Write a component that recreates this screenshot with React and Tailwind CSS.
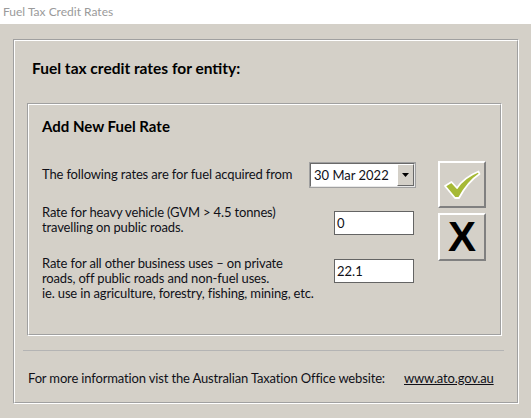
export default function App() {
  const etchedOuter = "border border-t-[#a0a0a0] border-l-[#a0a0a0] border-b-white border-r-white";
  const etchedInner = "border border-t-white border-l-white border-b-[#a0a0a0] border-r-[#a0a0a0]";
  const raised = "border-2 border-t-white border-l-white border-b-[#808080] border-r-[#808080]";
  return (
    <div className="w-[532px] h-[420px] bg-white overflow-hidden font-['Lato',sans-serif] text-[#101018]">
      <div className="h-6 pl-[3px] pt-[4px] text-[12px] leading-[16px] text-[#9a9a9a] whitespace-nowrap">Fuel Tax Credit Rates</div>
      <div className="w-[531px] h-[394px] bg-[#d4d0c8] pt-[15px] pl-[13px]">
        <div className={`w-[506px] h-[365px] ${etchedOuter}`}>
          <div className={`w-full h-full ${etchedInner}`}>
            <div className="pl-[17px] pt-[18px] text-[15.5px] leading-[18px] font-bold text-black whitespace-nowrap">
              Fuel tax credit rates for entity:
            </div>
            <div className={`ml-[12px] mt-[26px] w-[475px] h-[233px] ${etchedOuter}`}>
              <div className={`w-full h-full ${etchedInner} flex`}>
                <div className="pl-[13px] flex flex-col text-[13px] leading-[15px] tracking-[-0.15px] whitespace-nowrap">
                  <div className="mt-[12px] h-[18px] text-[15px] leading-[18px] tracking-normal font-bold text-black">
                    Add New Fuel Rate
                  </div>
                  <div className="mt-[27px] flex h-[26px]">
                    <div className="w-[267px] mt-[5px]">The following rates are for fuel acquired from</div>
                    <div className="w-[107px] h-[26px] border border-[#a0a0a0] flex">
                      <div className="flex-1 flex border border-t-[#696969] border-l-[#696969] border-b-[#e8e8e8] border-r-[#e8e8e8] bg-white">
                        <div className="flex-1 pl-[3px] pt-[4px] text-[13px] leading-[15px] tracking-normal">30 Mar 2022</div>
                        <div className="w-[17px] h-[22px] bg-[#d4d0c8] border border-t-white border-l-white border-b-[#696969] border-r-[#696969] flex items-center justify-center">
                          <svg width="8" height="5" viewBox="0 0 8 5"><path d="M0 0H7L3.5 4Z" fill="#000" /></svg>
                        </div>
                      </div>
                    </div>
                  </div>
                  <div className="mt-[16px] flex h-[32px]">
                    <div className="w-[292px] pt-[1px]">Rate for heavy vehicle (GVM &gt; 4.5 tonnes)<br />travelling on public roads.</div>
                    <div className="mt-[7px] w-[80px] h-[24px] border border-[#646464] bg-white pl-[2px] pt-[4px] tracking-normal">0</div>
                  </div>
                  <div className="mt-[18px] flex">
                    <div className="w-[292px] pt-[2px]">
                      Rate for all other business uses – on private<br />roads, off public roads and non-fuel uses.<br />ie. use in agriculture, forestry, fishing, mining, etc.
                    </div>
                    <div className="mt-[5px] w-[80px] h-[24px] border border-[#646464] bg-white pl-[2px] pt-[4px] tracking-normal">22.1</div>
                  </div>
                </div>
                <div className="ml-[22px] mt-[56px] flex flex-col gap-[5px]">
                  <div className={`w-[48px] h-[47px] ${raised} flex items-center justify-center`}>
                    <svg width="38" height="30" viewBox="0 0 38 30">
                      <path d="M2 16 L8.5 12 L14 18 Q21 7.5 35.5 1.5 L36.5 4 Q24.5 12 16 28 L12 28 Z" fill="#a6b936" stroke="#fff" strokeWidth="1.8" strokeLinejoin="round" />
                    </svg>
                  </div>
                  <div className={`w-[48px] h-[48px] ${raised} flex items-center justify-center font-['Liberation_Sans',sans-serif] font-bold text-[42px] leading-none text-black`}>
                    X
                  </div>
                </div>
              </div>
            </div>
            <div className="ml-[8px] mt-[14px] w-[481px] h-px bg-[#b4b4b4]"></div>
            <div className="pl-[13px] mt-[19px] flex text-[13px] leading-[17px] tracking-[-0.15px] whitespace-nowrap">
              <div className="w-[376px]">For more information vist the Australian Taxation Office website:</div>
              <div className="underline">www.ato.gov.au</div>
            </div>
          </div>
        </div>
      </div>
    </div>
  );
}
